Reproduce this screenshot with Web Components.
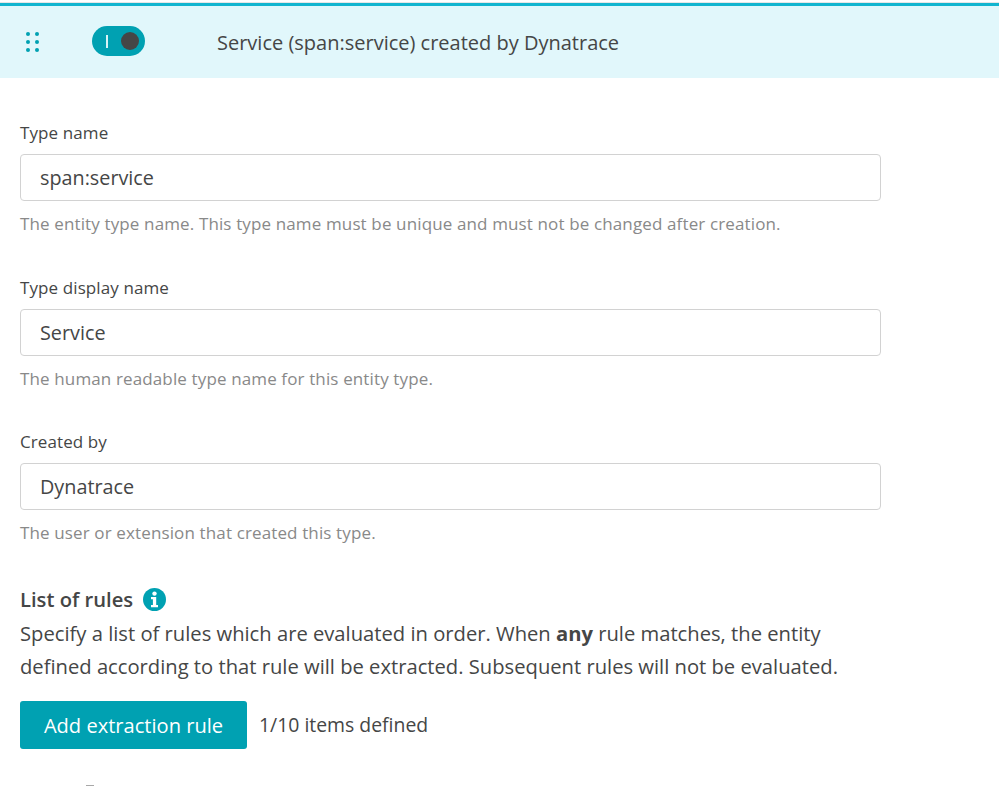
<!DOCTYPE html>
<html>
<head>
<meta charset="utf-8">
<title>Service</title>
<style>
  html, body { margin: 0; height: 100%; background: #fff; overflow: hidden; }
  body { font-family: "Open Sans", "Noto Sans", sans-serif; color: #454646; }
</style>
</head>
<body>
<type-header>Service (span:service) created by Dynatrace</type-header>
<type-form>
  <text-field label="Type name" value="span:service">The entity type name. This type name must be unique and must not be changed after creation.</text-field>
  <text-field label="Type display name" value="Service">The human readable type name for this entity type.</text-field>
  <text-field label="Created by" value="Dynatrace" style="margin-top:-1px">The user or extension that created this type.</text-field>
  <rules-section count="1/10 items defined"></rules-section>
</type-form>

<script>
class TypeHeader extends HTMLElement {
    constructor() {
        super();
        this.attachShadow({ mode: "open" });
    }

    connectedCallback() {
        this.shadowRoot.innerHTML = `
        <style>
            :host {
                display: flex;
                align-items: center;
                height: 72px;
                margin-top: 3px;
                border-top: 3px solid #12b5cf;
                box-shadow: 0 -1px 0 #e6e6e6;
                background: #e1f7fb;
                box-sizing: content-box;
            }
            .grip {
                display: grid;
                grid-template-columns: 4px 4px;
                gap: 4px 5px;
                margin-left: 26px;
            }
            .grip i {
                width: 4px;
                height: 4px;
                border-radius: 50%;
                background: #00a1b2;
            }
            .toggle {
                box-sizing: border-box;
                display: flex;
                align-items: center;
                justify-content: space-between;
                width: 53px;
                height: 30px;
                margin: 0 0 2px 53px;
                padding: 0 6px 0 14px;
                border-radius: 15px;
                background: #00a1b2;
            }
            .toggle b {
                width: 2px;
                height: 13px;
                background: #d8f3f6;
            }
            .toggle span {
                width: 18px;
                height: 18px;
                border-radius: 50%;
                background: #454646;
            }
            .title {
                margin-left: 72px;
                font-size: 20px;
                color: #454646;
            }
        </style>
        <div class="grip"><i></i><i></i><i></i><i></i><i></i><i></i></div>
        <div class="toggle"><b></b><span></span></div>
        <div class="title"><slot></slot></div>`;
    }
}

class TypeForm extends HTMLElement {
    constructor() {
        super();
        this.attachShadow({ mode: "open" });
    }

    connectedCallback() {
        this.shadowRoot.innerHTML = `
        <style>
            :host {
                display: flex;
                flex-direction: column;
                gap: 40px;
                padding: 43px 0 0 20px;
            }
        </style>
        <slot></slot>`;
    }
}

class TextField extends HTMLElement {
    constructor() {
        super();
        this.attachShadow({ mode: "open" });
    }

    connectedCallback() {
        this.shadowRoot.innerHTML = `
        <style>
            :host {
                display: block;
                width: 861px;
            }
            label {
                display: block;
                height: 24px;
                line-height: 24px;
                margin-bottom: 9px;
                font-size: 17px;
                letter-spacing: 0.1px;
                color: #454646;
            }
            .box {
                box-sizing: border-box;
                height: 47px;
                line-height: 45px;
                padding-left: 19px;
                border: 1px solid #d2d2d2;
                border-radius: 4px;
                font-size: 19.8px;
                color: #454646;
            }
            .hint {
                height: 24px;
                line-height: 24px;
                margin-top: 11px;
                font-size: 17px;
                letter-spacing: 0.13px;
                color: #898989;
                white-space: nowrap;
            }
        </style>
        <label>${this.getAttribute("label")}</label>
        <div class="box">${this.getAttribute("value")}</div>
        <div class="hint"><slot></slot></div>`;
    }
}

class RulesSection extends HTMLElement {
    constructor() {
        super();
        this.attachShadow({ mode: "open" });
    }

    connectedCallback() {
        this.shadowRoot.innerHTML = `
        <style>
            :host {
                display: block;
                color: #454646;
            }
            .head {
                display: flex;
                align-items: center;
                gap: 10px;
                height: 28px;
                font-size: 20.2px;
                font-weight: 600;
            }
            .head svg {
                display: block;
            }
            p {
                margin: 4px 0 0;
                font-size: 20.2px;
                line-height: 33px;
                white-space: nowrap;
            }
            .actions {
                display: flex;
                align-items: center;
                gap: 12px;
                margin-top: 18px;
            }
            button {
                width: 227px;
                height: 48px;
                padding: 0;
                border: 0;
                border-radius: 3px;
                background: #00a1b2;
                color: #fff;
                font: inherit;
                font-size: 20.1px;
            }
            .count {
                margin-bottom: 2px;
                font-size: 19.4px;
            }
            .cut {
                width: 8px;
                height: 1px;
                margin: 36px 0 0 66px;
                background: #a8a8a8;
            }
        </style>
        <div class="head">List of rules
            <svg width="23" height="23" viewBox="0 0 23 23">
                <circle cx="11.5" cy="11.5" r="11.5" fill="#00a1b2"/>
                <circle cx="11.5" cy="5.6" r="2.2" fill="#fff"/>
                <path d="M8 9h5.2v8H15v2.2H8V17h1.9v-5.8H8z" fill="#fff"/>
            </svg>
        </div>
        <p>Specify a list of rules which are evaluated in order. When <b>any</b> rule matches, the entity<br>defined according to that rule will be extracted. Subsequent rules will not be evaluated.</p>
        <div class="actions">
            <button>Add extraction rule</button>
            <span class="count">${this.getAttribute("count")}</span>
        </div>
        <div class="cut"></div>`;
    }
}

customElements.define('type-header', TypeHeader);
customElements.define('type-form', TypeForm);
customElements.define('text-field', TextField);
customElements.define('rules-section', RulesSection);
</script>
</body>
</html>
